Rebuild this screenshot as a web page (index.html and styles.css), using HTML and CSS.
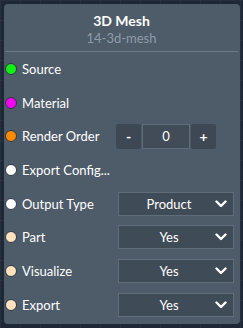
FILE: index.html
```html
<!DOCTYPE html>
<html lang="en">
<head>
    <meta charset="UTF-8">
    <meta name="viewport" content="width=device-width, initial-scale=1.0">
    <title>3D Mesh</title>
    <link rel="stylesheet" href="styles.css">
</head>
<body>
<div class="node">
  <div class="node-head">
    <div class="title">3D Mesh</div>
    <div class="subtitle">14-3d-mesh</div>
  </div>
  <div class="row"><span class="dot green"></span><span class="label">Source</span></div>
  <div class="row"><span class="dot magenta"></span><span class="label">Material</span></div>
  <div class="row">
    <span class="dot orange"></span><span class="label">Render Order</span>
    <div class="stepper">
      <button class="step">-</button>
      <div class="step-value">0</div>
      <button class="step">+</button>
    </div>
  </div>
  <div class="row"><span class="dot white"></span><span class="label">Export Config...</span></div>
  <div class="row">
    <span class="dot white"></span><span class="label">Output Type</span>
    <div class="select"><span>Product</span><svg class="chev" viewBox="0 0 12 8"><path d="M1.5 1.5 6 6 10.5 1.5" /></svg></div>
  </div>
  <div class="row">
    <span class="dot peach"></span><span class="label">Part</span>
    <div class="select"><span>Yes</span><svg class="chev" viewBox="0 0 12 8"><path d="M1.5 1.5 6 6 10.5 1.5" /></svg></div>
  </div>
  <div class="row">
    <span class="dot peach"></span><span class="label">Visualize</span>
    <div class="select"><span>Yes</span><svg class="chev" viewBox="0 0 12 8"><path d="M1.5 1.5 6 6 10.5 1.5" /></svg></div>
  </div>
  <div class="row">
    <span class="dot peach"></span><span class="label">Export</span>
    <div class="select"><span>Yes</span><svg class="chev" viewBox="0 0 12 8"><path d="M1.5 1.5 6 6 10.5 1.5" /></svg></div>
  </div>
</div>
</body>
</html>
```
FILE: styles.css
```css
body {
  margin: 0;
  height: 328px;
  font-family: "Lato", "Open Sans", sans-serif;
  background-color: #1d2735;
  background-image:
    linear-gradient(rgba(255,255,255,0.04) 1px, transparent 1px),
    linear-gradient(90deg, rgba(255,255,255,0.04) 1px, transparent 1px);
  background-size: 20px 20px;
  overflow: hidden;
}
.node {
  margin: 4px 0 0 4px;
  width: 236px;
  height: 320px;
  background-color: #4e5b69;
  border-radius: 4px;
  box-sizing: border-box;
}
.node-head {
  height: 48px;
  border-bottom: 1px solid #6b7a89;
  margin: 0 2px 0 1px;
  text-align: center;
  padding-top: 9px;
  box-sizing: border-box;
}
.title {
  color: #ffffff;
  font-weight: bold;
  font-size: 14px;
  line-height: 16px;
}
.subtitle {
  color: #8e9cab;
  font-size: 13px;
  line-height: 17px;
  margin-top: 1px;
}
.row {
  height: 33.7px;
  display: flex;
  align-items: center;
  padding-left: 1px;
}
.dot {
  width: 10px;
  height: 10px;
  border-radius: 50%;
  border: 1px solid #2d3845;
  flex-shrink: 0;
}
.green { background-color: #12f012; }
.magenta { background-color: #f500f5; }
.orange { background-color: #ff8a00; }
.white { background-color: #ffffff; }
.peach { background-color: #ffe3bf; }
.label {
  color: #ffffff;
  font-size: 13px;
  margin-left: 5px;
  flex: 1;
  white-space: nowrap;
}
.stepper {
  display: flex;
  align-items: stretch;
  height: 25px;
  margin-right: 24px;
}
.step {
  width: 25px;
  border: none;
  padding: 0;
  background-color: #3e4854;
  color: #ffffff;
  font-family: inherit;
  font-size: 14px;
  font-weight: bold;
  border-radius: 2px;
}
.step-value {
  width: 46px;
  margin: 0 1px;
  background-color: #414c58;
  border: 1px solid #5f6c7a;
  color: #ffffff;
  font-size: 13px;
  display: flex;
  align-items: center;
  justify-content: center;
}
.select {
  width: 116px;
  height: 24px;
  margin-right: 6px;
  box-sizing: border-box;
  background-color: #404b58;
  border: 1px solid #5f6d7b;
  display: flex;
  align-items: center;
  color: #ffffff;
  font-size: 13px;
}
.select span {
  flex: 1;
  text-align: center;
  padding-left: 4px;
}
.chev {
  width: 12px;
  height: 8px;
  margin-right: 6px;
  fill: none;
  stroke: #ffffff;
  stroke-width: 2.4;
  stroke-linecap: round;
  stroke-linejoin: round;
}
```
